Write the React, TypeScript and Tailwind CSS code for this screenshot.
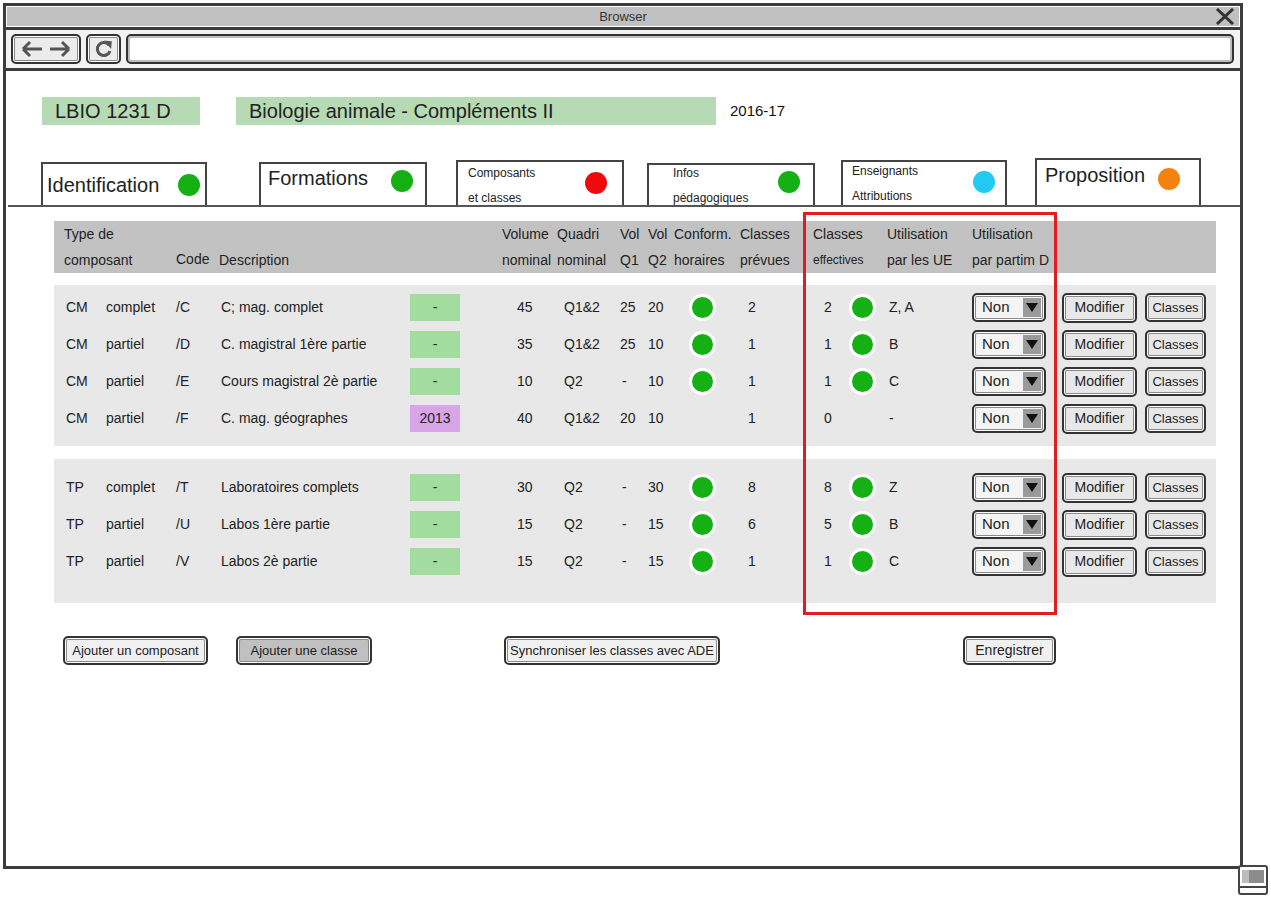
import { clsx } from "clsx";

type Row = {
  type: string;
  kind: string;
  code: string;
  desc: string;
  badge: string;
  purple?: boolean;
  vol: string;
  quadri: string;
  q1: string;
  q2: string;
  conform: boolean;
  prevues: string;
  eff: string;
  effDot: boolean;
  ue: string;
};

const groupA: Row[] = [
  { type: "CM", kind: "complet", code: "/C", desc: "C; mag. complet", badge: "-", vol: "45", quadri: "Q1&2", q1: "25", q2: "20", conform: true, prevues: "2", eff: "2", effDot: true, ue: "Z, A" },
  { type: "CM", kind: "partiel", code: "/D", desc: "C. magistral 1ère partie", badge: "-", vol: "35", quadri: "Q1&2", q1: "25", q2: "10", conform: true, prevues: "1", eff: "1", effDot: true, ue: "B" },
  { type: "CM", kind: "partiel", code: "/E", desc: "Cours magistral 2è partie", badge: "-", vol: "10", quadri: "Q2", q1: "-", q2: "10", conform: true, prevues: "1", eff: "1", effDot: true, ue: "C" },
  { type: "CM", kind: "partiel", code: "/F", desc: "C. mag. géographes", badge: "2013", purple: true, vol: "40", quadri: "Q1&2", q1: "20", q2: "10", conform: false, prevues: "1", eff: "0", effDot: false, ue: "-" },
];

const groupB: Row[] = [
  { type: "TP", kind: "complet", code: "/T", desc: "Laboratoires complets", badge: "-", vol: "30", quadri: "Q2", q1: "-", q2: "30", conform: true, prevues: "8", eff: "8", effDot: true, ue: "Z" },
  { type: "TP", kind: "partiel", code: "/U", desc: "Labos 1ère partie", badge: "-", vol: "15", quadri: "Q2", q1: "-", q2: "15", conform: true, prevues: "6", eff: "5", effDot: true, ue: "B" },
  { type: "TP", kind: "partiel", code: "/V", desc: "Labos 2è partie", badge: "-", vol: "15", quadri: "Q2", q1: "-", q2: "15", conform: true, prevues: "1", eff: "1", effDot: true, ue: "C" },
];

const cols =
  "grid grid-cols-[42px_70px_43px_189px_94px_55px_63px_28px_26px_66px_73px_74px_85px_90px_83px_1fr] pl-[10px]";

function Dot() {
  return <div className="w-[27px] h-[27px] rounded-full bg-[#14b014] border-[3px] border-white" />;
}

function Btn({ children, className }: { children: React.ReactNode; className?: string }) {
  return (
    <div
      className={clsx(
        "flex items-center justify-center rounded-[5px] border-2 border-[#333] shadow-[inset_0_0_0_1px_#fff,inset_0_0_0_2px_#8a8a8a] text-[#222]",
        className
      )}
    >
      {children}
    </div>
  );
}

function Select() {
  return (
    <div className="relative flex items-center w-[74px] h-[29px] rounded-[5px] border-2 border-[#333] bg-[#f4f4f4] shadow-[inset_0_0_0_1px_#fff,inset_0_0_0_2px_#8a8a8a] pl-[8px] text-[15px] text-[#222]">
      Non
      <div className="absolute right-[3px] top-[3px] bottom-[3px] w-[18px] bg-[#9a9a9a] flex items-center justify-center">
        <svg width="12" height="9" viewBox="0 0 12 9">
          <path d="M0 0 L12 0 L6 9 Z" fill="#111" />
        </svg>
      </div>
    </div>
  );
}

function TableRow({ r }: { r: Row }) {
  return (
    <div className={clsx(cols, "h-[37px] items-center text-[14px] text-[#222]")}>
      <div className="pl-[2px]">{r.type}</div>
      <div>{r.kind}</div>
      <div>{r.code}</div>
      <div className="pl-[2px]">{r.desc}</div>
      <div className="pl-[2px]">
        <div
          className={clsx(
            "w-[50px] h-[27px] flex items-center justify-center",
            r.purple ? "bg-[#d8a5e8]" : "bg-[#a2dc9f]"
          )}
        >
          {r.badge}
        </div>
      </div>
      <div className="pl-[15px]">{r.vol}</div>
      <div className="pl-[7px]">{r.quadri}</div>
      <div className={r.q1 === "-" ? "pl-[2px]" : ""}>{r.q1}</div>
      <div>{r.q2}</div>
      <div className="pl-[15px]">{r.conform && <Dot />}</div>
      <div className="pl-[8px]">{r.prevues}</div>
      <div className="flex items-center pl-[11px]">
        <span className="w-[25px]">{r.eff}</span>
        {r.effDot && <Dot />}
      </div>
      <div className="pl-[2px]">{r.ue}</div>
      <div>
        <Select />
      </div>
      <div>
        <Btn className="w-[75px] h-[30px] text-[14px]">Modifier</Btn>
      </div>
      <div>
        <Btn className="w-[61px] h-[29px] text-[13px]">Classes</Btn>
      </div>
    </div>
  );
}

function Tab({
  lines,
  big,
  dot,
  className,
  textClass,
}: {
  lines: string[];
  big?: boolean;
  dot: string;
  className: string;
  textClass: string;
}) {
  return (
    <div className={clsx("flex justify-between border-2 border-b-0 border-[#444] bg-white", className)}>
      <div className={clsx("flex flex-col", textClass, big ? "text-[20px] leading-[26px]" : "text-[12px] leading-[25px]")}>
        {lines.map((l) => (
          <span key={l}>{l}</span>
        ))}
      </div>
      <div className={clsx("w-[22px] h-[22px] rounded-full", dot)} />
    </div>
  );
}

export default function App() {
  return (
    <div className="w-[1271px] h-[899px] bg-white font-['Liberation_Sans',Arial,sans-serif] text-[#222] pt-[3px] pl-[3px]">
      <div className="relative w-[1240px] h-[866px] border-[3px] border-[#3c3c3c] flex flex-col">
        {/* title bar */}
        <div className="mt-[1px] mx-[1px] h-[19px] bg-[#c0c0c0] grid grid-cols-[1fr_auto_1fr] items-center">
          <div />
          <span className="text-[13px] text-[#333]">Browser</span>
          <div className="flex justify-end pr-[4px]">
            <svg width="20" height="17" viewBox="0 0 20 17">
              <path d="M2 1 L18 16 M18 1 L2 16" stroke="#333" strokeWidth="3" />
            </svg>
          </div>
        </div>
        <div className="h-[1px]" />
        <div className="h-[3px] bg-[#3c3c3c]" />
        {/* toolbar */}
        <div className="h-[38px] bg-[#f3f3f3] flex items-center">
          <div className="ml-[5px] w-[70px] h-[30px] rounded-[5px] border-2 border-[#333] bg-[#ececec] shadow-[inset_0_0_0_1px_#fff,inset_0_0_0_2px_#8a8a8a] flex items-center justify-center">
            <svg width="52" height="18" viewBox="0 0 52 18">
              <path d="M3 9 H22 M3 9 L10 2 M3 9 L10 16" stroke="#555" strokeWidth="3" fill="none" />
              <path d="M30 9 H49 M49 9 L42 2 M49 9 L42 16" stroke="#555" strokeWidth="3" fill="none" />
            </svg>
          </div>
          <div className="ml-[5px] w-[35px] h-[30px] rounded-[5px] border-2 border-[#333] bg-[#ececec] shadow-[inset_0_0_0_1px_#fff,inset_0_0_0_2px_#8a8a8a] flex items-center justify-center">
            <svg width="18" height="18" viewBox="0 0 18 18">
              <path d="M14 5 A6.5 6.5 0 1 0 15 11" stroke="#555" strokeWidth="3" fill="none" />
              <path d="M11 1.5 L16 2 L15.5 7 Z" fill="#555" stroke="#555" strokeWidth="1.5" />
            </svg>
          </div>
          <div className="ml-[5px] mr-[6px] flex-1 h-[30px] rounded-[5px] border-2 border-[#333] bg-white shadow-[inset_0_0_0_2px_#bdbdbd]" />
        </div>
        <div className="h-[3px] bg-[#3c3c3c]" />

        {/* content */}
        <div className="flex items-center mt-[26px]">
          <div className="ml-[36px] w-[158px] h-[28px] bg-[#b6dab3] flex items-center pl-[13px] text-[20px]">
            LBIO 1231 D
          </div>
          <div className="ml-[36px] w-[480px] h-[28px] bg-[#b6dab3] flex items-center pl-[13px] text-[20px]">
            Biologie animale - Compléments II
          </div>
          <div className="ml-[14px] text-[15px] text-[#111]">2016-17</div>
        </div>

        {/* tabs */}
        <div className="mt-[33px] ml-[2px] h-[49px] border-b-2 border-[#555] flex items-end">
          <Tab
            className="ml-[33px] w-[166px] h-[43px] items-center pr-[5px]"
            textClass="pl-[4px]"
            lines={["Identification"]}
            big
            dot="bg-[#14b014]"
          />
          <Tab
            className="ml-[52px] w-[168px] h-[43px] pr-[12px]"
            textClass="pl-[7px] pt-[1px]"
            lines={["Formations"]}
            big
            dot="bg-[#14b014] mt-[6px]"
          />
          <Tab
            className="ml-[29px] w-[168px] h-[45px] pr-[15px]"
            textClass="pl-[10px] -mt-[1px]"
            lines={["Composants", "et classes"]}
            dot="bg-[#ee0a0a] mt-[10px]"
          />
          <Tab
            className="ml-[23px] w-[168px] h-[42px] pr-[13px]"
            textClass="pl-[24px] -mt-[4px]"
            lines={["Infos", "pédagogiques"]}
            dot="bg-[#14b014] mt-[6px]"
          />
          <Tab
            className="ml-[26px] w-[166px] h-[45px] pr-[10px]"
            textClass="pl-[9px] -mt-[3px]"
            lines={["Enseignants", "Attributions"]}
            dot="bg-[#22c9f3] mt-[9px]"
          />
          <Tab
            className="ml-[28px] w-[166px] h-[47px] pr-[19px]"
            textClass="pl-[8px] pt-[2px]"
            lines={["Proposition"]}
            big
            dot="bg-[#f5820f] mt-[8px]"
          />
        </div>

        {/* table */}
        <div className="ml-[48px] mt-[14px] w-[1162px]">
          <div className={clsx(cols, "h-[52px] bg-[#c2c2c2] text-[14px] leading-[26px] text-[#222]")}>
            <div className="col-span-2 flex flex-col">
              <span>Type de</span>
              <span>composant</span>
            </div>
            <div className="flex flex-col">
              <span>&nbsp;</span>
              <span className="-mt-[1px]">Code</span>
            </div>
            <div className="flex flex-col">
              <span>&nbsp;</span>
              <span>Description</span>
            </div>
            <div />
            <div className="flex flex-col">
              <span>Volume</span>
              <span>nominal</span>
            </div>
            <div className="flex flex-col">
              <span>Quadri</span>
              <span>nominal</span>
            </div>
            <div className="flex flex-col">
              <span>Vol</span>
              <span>Q1</span>
            </div>
            <div className="flex flex-col">
              <span>Vol</span>
              <span>Q2</span>
            </div>
            <div className="flex flex-col">
              <span>Conform.</span>
              <span>horaires</span>
            </div>
            <div className="flex flex-col">
              <span>Classes</span>
              <span>prévues</span>
            </div>
            <div className="flex flex-col">
              <span>Classes</span>
              <span className="text-[12px]">effectives</span>
            </div>
            <div className="flex flex-col">
              <span>Utilisation</span>
              <span>par les UE</span>
            </div>
            <div className="flex flex-col whitespace-nowrap">
              <span>Utilisation</span>
              <span>par partim D</span>
            </div>
          </div>

          <div className="mt-[12px] bg-[#e8e8e8] pt-[4px] pb-[9px]">
            {groupA.map((r) => (
              <TableRow key={r.code} r={r} />
            ))}
          </div>
          <div className="mt-[13px] bg-[#e8e8e8] pt-[10px] pb-[23px]">
            {groupB.map((r) => (
              <TableRow key={r.code} r={r} />
            ))}
          </div>
        </div>

        {/* bottom buttons */}
        <div className="mt-[33px] flex text-[13px]">
          <Btn className="ml-[57px] w-[145px] h-[29px] bg-[#f0f0f0]">Ajouter un composant</Btn>
          <Btn className="ml-[28px] w-[136px] h-[29px] bg-[#c0c0c0]">Ajouter une classe</Btn>
          <Btn className="ml-[132px] w-[216px] h-[29px] bg-[#f0f0f0]">Synchroniser les classes avec ADE</Btn>
          <Btn className="ml-[243px] w-[93px] h-[29px] bg-[#f0f0f0] text-[14px]">Enregistrer</Btn>
        </div>

        {/* highlight box */}
        <div className="absolute left-[797px] top-[206px] w-[254px] h-[403px] border-[3px] border-[#e31b23] pointer-events-none" />

        {/* resize handle */}
        <div className="absolute left-[1232px] top-[859px] w-[30px] h-[30px] rounded-[3px] border-2 border-[#444] bg-white flex flex-col">
          <div className="mt-[3px] mx-[2px] h-[13px] flex">
            <div className="w-[7px] bg-[#bdbdbd]" />
            <div className="flex-1 bg-[#8c8c8c]" />
          </div>
          <div className="mt-[3px] h-[2px] bg-[#444]" />
        </div>
      </div>
    </div>
  );
}
